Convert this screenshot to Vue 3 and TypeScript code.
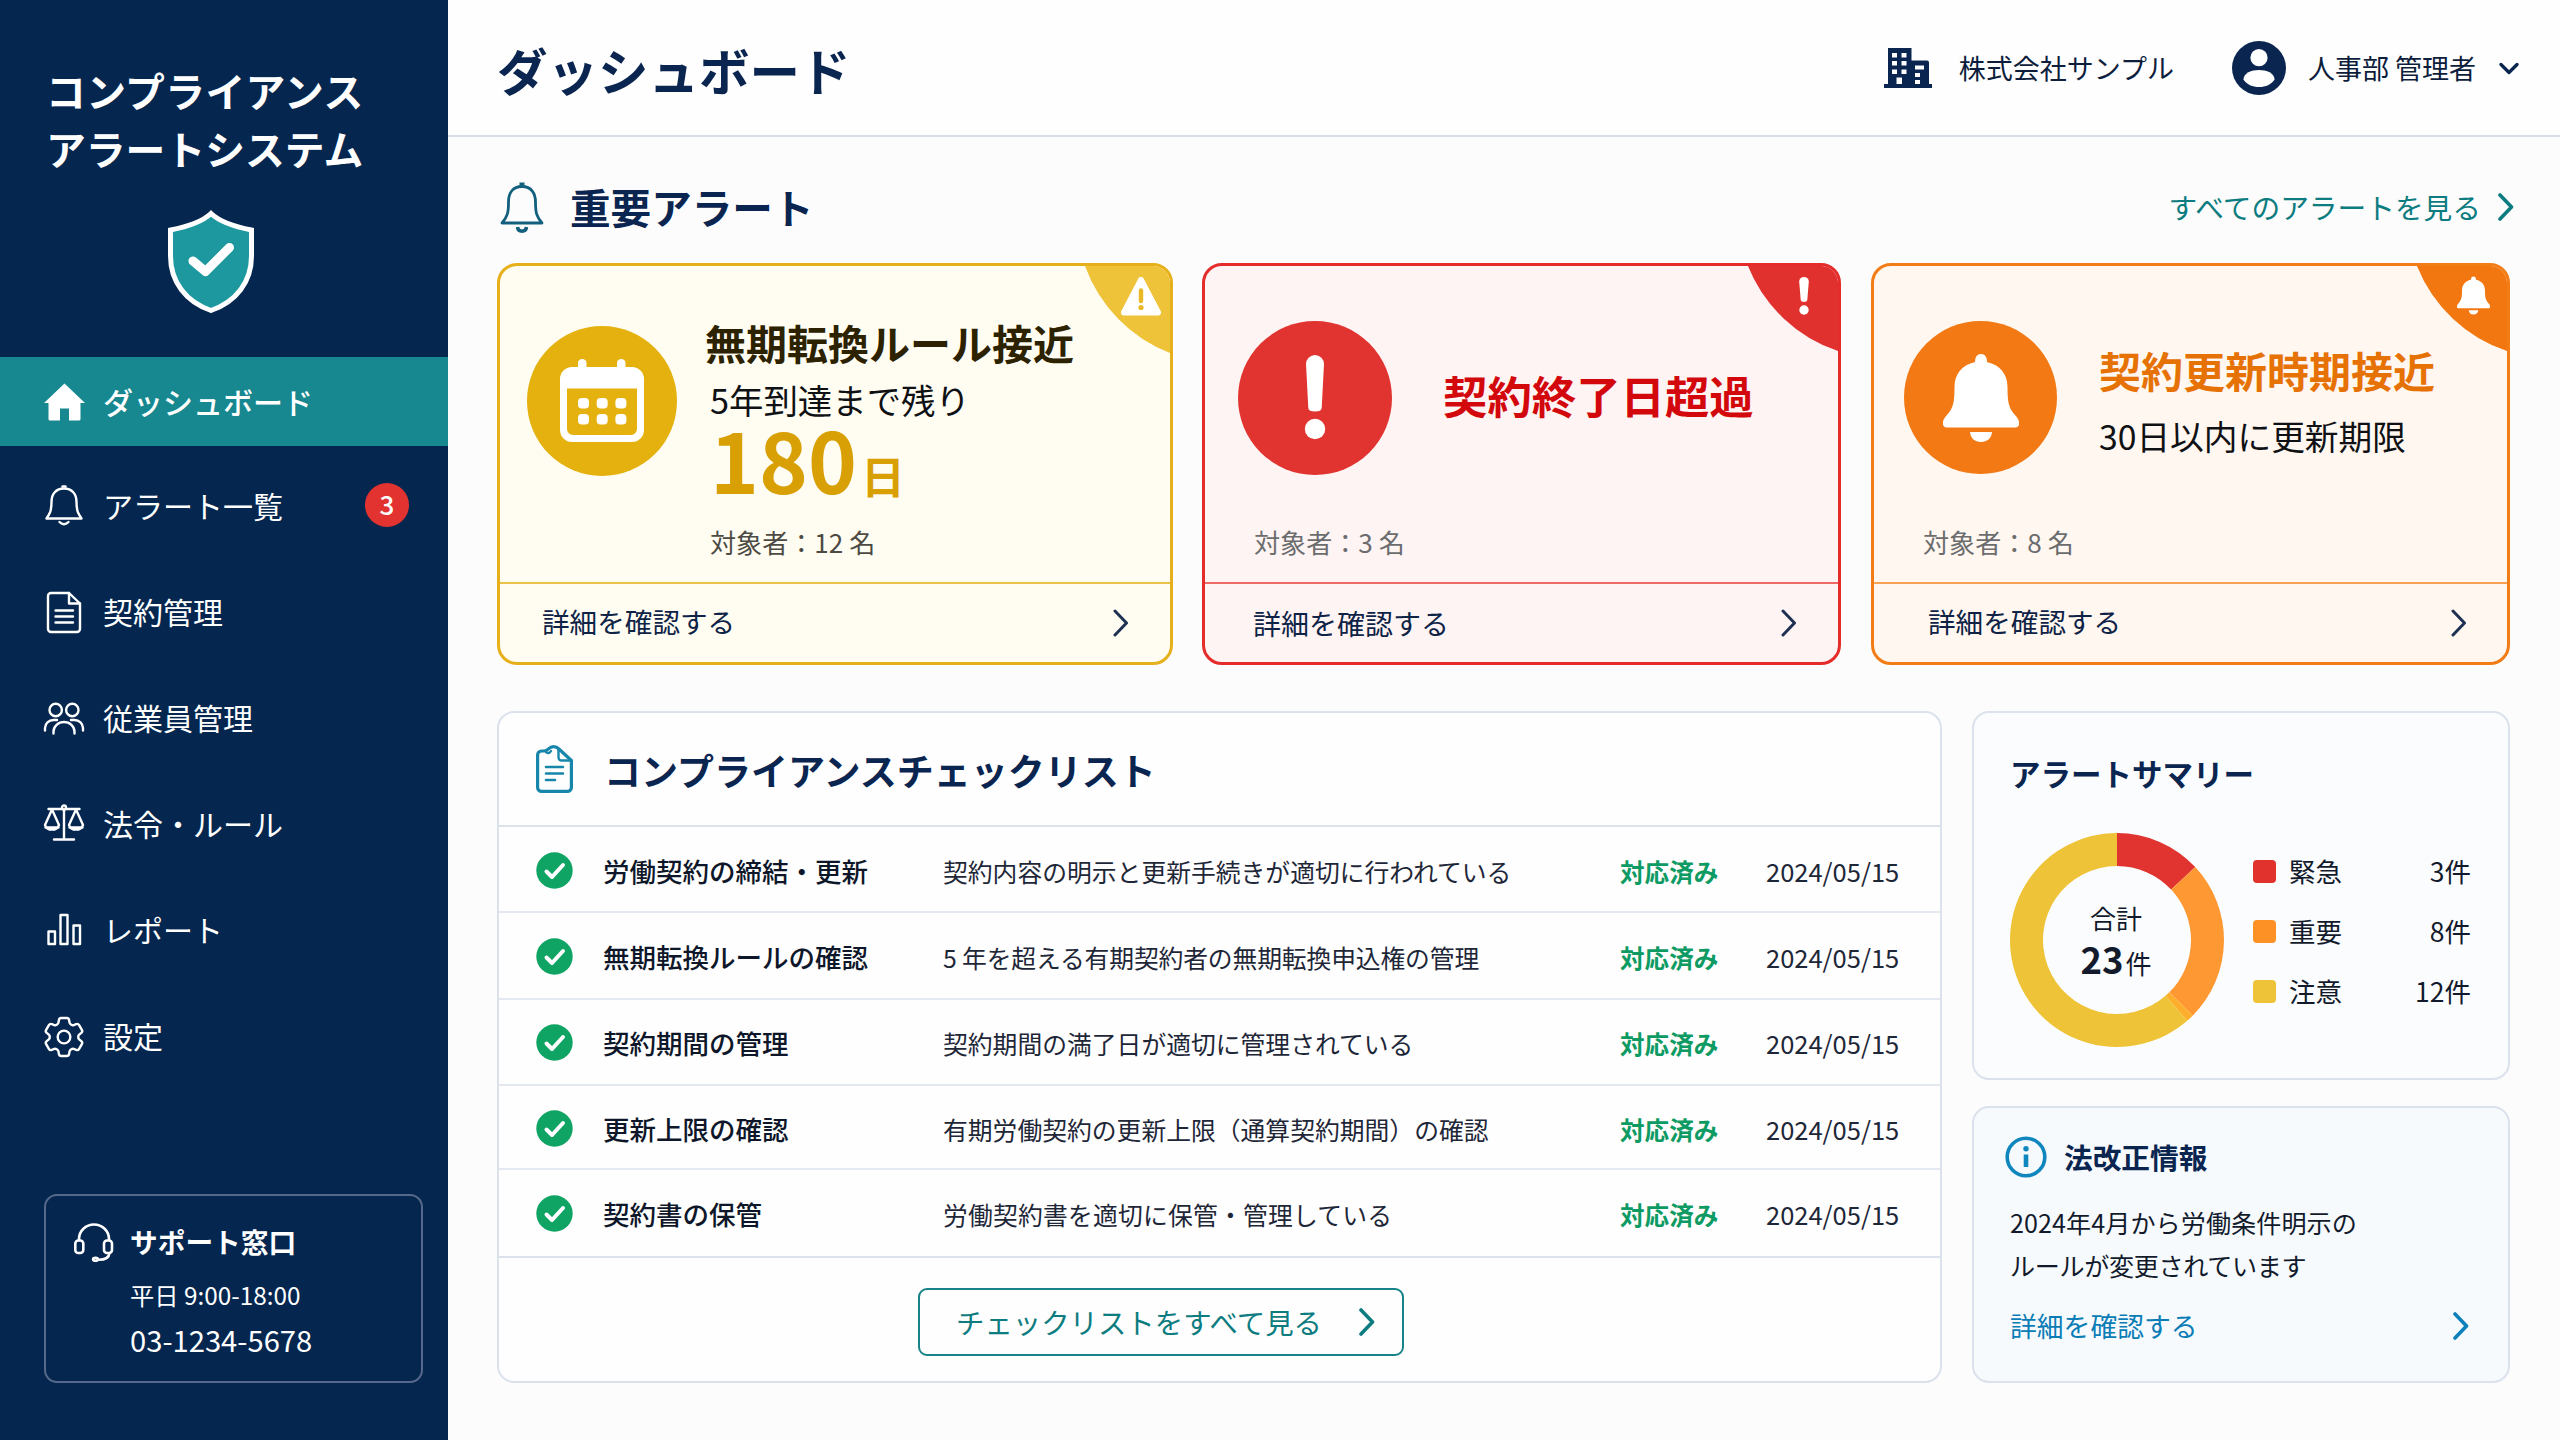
<script setup lang="ts">
interface NavItem {
  label: string
  viewBox?: string
  filled?: boolean
  active?: boolean
  badge?: number
  paths: string[]
}

interface CheckItem {
  name: string
  desc: string
  date: string
}

interface Slice {
  label: string
  count: number
  color: string
}

const navItems: NavItem[] = [
  {
    label: 'ダッシュボード',
    active: true,
    filled: true,
    paths: ['M22.5 3.5 L43 23 H38.5 V39 Q38.5 40.5 37 40.5 H27 V28.5 H18 V40.5 H8 Q6.5 40.5 6.5 39 V23 H2 Z'],
  },
  {
    label: 'アラート一覧',
    badge: 3,
    paths: [
      'M22 3.5 C14 3.5 9.5 9 9.5 17 C9.5 25.5 8 28.5 4.5 33.5 H39.5 C36 28.5 34.5 25.5 34.5 17 C34.5 9 30 3.5 22 3.5Z',
      'M20.5 1.5 H23.5',
      'M17.5 37 Q22 41.5 26.5 37',
    ],
  },
  {
    label: '契約管理',
    paths: [
      'M9 2 H27 L38 12.5 V38 A3 3 0 0 1 35 41 H9 A3 3 0 0 1 6 38 V5 A3 3 0 0 1 9 2Z',
      'M27 2 V12.5 H38',
      'M13.5 19.5 H31 M13.5 25.5 H31 M13.5 31.5 H31',
    ],
  },
  {
    label: '従業員管理',
    paths: [
      'M19.9 13 A6.2 6.2 0 1 1 7.5 13 A6.2 6.2 0 1 1 19.9 13Z',
      'M36.5 13 A6.2 6.2 0 1 1 24.1 13 A6.2 6.2 0 1 1 36.5 13Z',
      'M3 33.5 V31 A8.5 8 0 0 1 11.5 23 H15',
      'M41 33.5 V31 A8.5 8 0 0 0 32.5 23 H29',
      'M11.5 36.5 V34.5 A10.5 9.5 0 0 1 32.5 34.5 V36.5',
    ],
  },
  {
    label: '法令・ルール',
    paths: [
      'M24 4.5 A2 2 0 1 1 20 4.5 A2 2 0 1 1 24 4.5Z',
      'M22 7 V36.5 M12 36.5 H32 M6.5 6 H20 M24 6 H37.5',
      'M10 6.5 L3 22 A7.3 6.5 0 0 0 17 22 Z M3.5 24.5 H16.5',
      'M34 6.5 L27 22 A7.3 6.5 0 0 0 41 22 Z M27.5 24.5 H40.5',
    ],
  },
  {
    label: 'レポート',
    paths: ['M6.5 22.5 H13 V35 H6.5Z', 'M18.5 6 H25.5 V35 H18.5Z', 'M31.5 16.5 H38 V35 H31.5Z'],
  },
  {
    label: '設定',
    viewBox: '1.6 1.6 20.8 20.8',
    paths: [
      'M9.594 3.94c.09-.542.56-.94 1.11-.94h2.593c.55 0 1.02.398 1.11.94l.213 1.281c.063.374.313.686.645.87.074.04.147.083.22.127.325.196.72.257 1.075.124l1.217-.456a1.125 1.125 0 0 1 1.37.49l1.296 2.247a1.125 1.125 0 0 1-.26 1.431l-1.003.827c-.293.241-.438.613-.43.992a7.723 7.723 0 0 1 0 .255c-.008.378.137.75.43.991l1.004.827c.424.35.534.955.26 1.43l-1.298 2.247a1.125 1.125 0 0 1-1.369.491l-1.217-.456c-.355-.133-.75-.072-1.076.124a6.47 6.47 0 0 1-.22.128c-.331.183-.581.495-.644.869l-.213 1.281c-.09.543-.56.94-1.11.94h-2.594c-.55 0-1.019-.398-1.11-.94l-.213-1.281c-.062-.374-.312-.686-.644-.87a6.52 6.52 0 0 1-.22-.127c-.325-.196-.72-.257-1.076-.124l-1.217.456a1.125 1.125 0 0 1-1.369-.49l-1.297-2.247a1.125 1.125 0 0 1 .26-1.431l1.004-.827c.292-.24.437-.613.43-.991a6.932 6.932 0 0 1 0-.255c.007-.38-.138-.751-.43-.992l-1.004-.827a1.125 1.125 0 0 1-.26-1.43l1.297-2.247a1.125 1.125 0 0 1 1.37-.491l1.216.456c.356.133.751.072 1.076-.124.072-.044.146-.086.22-.128.332-.183.582-.495.644-.869l.214-1.28Z',
      'M15 12a3 3 0 1 1-6 0 3 3 0 0 1 6 0Z',
    ],
  },
]

const checks: CheckItem[] = [
  { name: '労働契約の締結・更新', desc: '契約内容の明示と更新手続きが適切に行われている', date: '2024/05/15' },
  { name: '無期転換ルールの確認', desc: '5 年を超える有期契約者の無期転換申込権の管理', date: '2024/05/15' },
  { name: '契約期間の管理', desc: '契約期間の満了日が適切に管理されている', date: '2024/05/15' },
  { name: '更新上限の確認', desc: '有期労働契約の更新上限（通算契約期間）の確認', date: '2024/05/15' },
  { name: '契約書の保管', desc: '労働契約書を適切に保管・管理している', date: '2024/05/15' },
]

const slices: Slice[] = [
  { label: '緊急', count: 3, color: '#e2322e' },
  { label: '重要', count: 8, color: '#fd9126' },
  { label: '注意', count: 12, color: '#efc338' },
]
const total = slices.reduce((sum, s) => sum + s.count, 0)

// Donut ring segments, angles clockwise from the top.
const ring = [
  { from: 0, to: 47, color: '#e1332f' },
  { from: 47, to: 135, color: '#fe9833' },
  { from: 135, to: 139, color: '#fdae2a' },
  { from: 139, to: 360, color: '#efc338' },
]

function arc(from: number, to: number): string {
  const point = (r: number, deg: number) => {
    const a = ((deg - 90) * Math.PI) / 180
    return `${(107 + r * Math.cos(a)).toFixed(2)} ${(107 + r * Math.sin(a)).toFixed(2)}`
  }
  const large = to - from > 180 ? 1 : 0
  return `M${point(107, from)} A107 107 0 ${large} 1 ${point(107, to)} L${point(74, to)} A74 74 0 ${large} 0 ${point(74, from)} Z`
}

const filledBell =
  'M38 0 C42 0 44 3 44 8 C57 11 64.5 20 64.5 33 C64.5 47 65.5 54 72 61 C78 67 77 73.5 72.5 73.5 H3.5 C-1 73.5 -2 67 4 61 C10.5 54 11.5 47 11.5 33 C11.5 20 19 11 32 8 C32 3 34 0 38 0Z M27 78 H49 C48.5 84.5 44 88 38 88 C32 88 27.5 84.5 27 78Z'
</script>

<template>
  <div class="app">
    <aside class="sidebar">
      <h1 class="brand"><span class="brand-first">コンプライアンス</span><br />アラートシステム</h1>
      <svg class="shield" width="88" height="104" viewBox="0 0 88 104">
        <path d="M44 3.5 C35 12 19 17 3.5 20 V46 C3.5 72 19 92 44 100.5 C69 92 84.5 72 84.5 46 V20 C69 17 53 12 44 3.5Z" fill="#1e989f" stroke="#fff" stroke-width="5" />
        <path d="M26 51 L38.5 61.5 L62.5 37.5" fill="none" stroke="#fff" stroke-width="9" stroke-linecap="round" stroke-linejoin="round" />
      </svg>
      <nav class="nav">
        <a v-for="item in navItems" :key="item.label" class="nav-item" :class="{ active: item.active }">
          <svg class="nav-icon" :class="{ filled: item.filled }" :viewBox="item.viewBox ?? '0 0 44 44'">
            <path v-for="d in item.paths" :key="d" :d="d" vector-effect="non-scaling-stroke" />
          </svg>
          <span class="nav-label">{{ item.label }}</span>
          <b v-if="item.badge" class="badge">{{ item.badge }}</b>
        </a>
      </nav>
      <section class="support">
        <svg class="headset" width="40" height="40" viewBox="0 0 40 40">
          <g fill="none" stroke="#fff" stroke-width="2.6">
            <path d="M5 18 V16 A15 14.5 0 0 1 35 16 V18" />
            <rect x="1.3" y="17.5" width="8" height="12.5" rx="3" />
            <rect x="30" y="17.5" width="8" height="12.5" rx="3" />
            <path d="M35.5 30 C35 35 31 37 24 36.8" />
            <ellipse cx="21.5" cy="36.3" rx="2.4" ry="1.5" />
          </g>
        </svg>
        <div>
          <p class="support-title">サポート窓口</p>
          <p class="support-hours">平日 9:00-18:00</p>
          <p class="support-tel">03-1234-5678</p>
        </div>
      </section>
    </aside>

    <div class="page">
      <header class="topbar">
        <h2 class="page-title">ダッシュボード</h2>
        <svg class="building" width="48" height="40" viewBox="0 0 48 40">
          <path fill="#0a2550" fill-rule="evenodd" d="M4 0 H27.5 V12.5 H43 Q45 12.5 45 14.5 V36 H48 V40 H0 V36 H4Z M8 5 V9.5 H13 V5Z M17.5 5 V9.5 H22.5 V5Z M8 13 V17.5 H13 V13Z M17.5 13 V17.5 H22.5 V13Z M8 21.5 V26 H13 V21.5Z M17.5 21.5 V26 H22.5 V21.5Z M12.5 29.5 V36 H18 V29.5Z M31 17.5 V21.5 H40 V17.5Z M31 25 V29 H36 V25Z M31 32 V36 H36 V32Z" />
        </svg>
        <span class="company">株式会社サンプル</span>
        <svg class="avatar" width="54" height="54" viewBox="0 0 54 54">
          <circle cx="27" cy="27" r="27" fill="#0a2550" />
          <circle cx="27" cy="16.7" r="8.6" fill="#fff" />
          <path d="M11.5 38.5 C11.5 32 19.5 29 27 29 C34.5 29 42.5 32 42.5 38.5 C39.5 43.5 33.5 46 27 46 C20.5 46 14.5 43.5 11.5 38.5Z" fill="#fff" />
        </svg>
        <span class="user">人事部 管理者</span>
        <svg class="caret" width="20" height="13" viewBox="0 0 20 13"><path d="M2 2.5 L10 10.5 L18 2.5" fill="none" stroke="#0a2550" stroke-width="3.2" stroke-linecap="round" stroke-linejoin="round" /></svg>
      </header>

      <main class="content">
        <div class="section-head">
          <svg width="44" height="51" viewBox="0 0 44 51">
            <g fill="none" stroke="#12607d" stroke-width="2.8" stroke-linejoin="round">
              <path d="M22 4.5 C12.5 4.5 8.5 11.5 8.5 20 C8.5 31 7.5 34.5 2 41 H42 C36.5 34.5 35.5 31 35.5 20 C35.5 11.5 31.5 4.5 22 4.5Z" />
              <path d="M22 0.5 V5" stroke-width="5" />
              <path d="M17.5 45 C18 50.5 26 50.5 26.5 45" stroke-width="3.5" />
            </g>
          </svg>
          <h3>重要アラート</h3>
          <a class="all-link">すべてのアラートを見る</a>
          <svg class="chev teal" width="16" height="28" viewBox="0 0 16 28"><path d="M2 2 L13.5 14 L2 26" /></svg>
        </div>

        <div class="cards">
          <article class="card yellow">
            <svg class="corner" width="85" height="87" viewBox="0 0 85 87"><path d="M0 0 A147 147 0 0 0 85 87 V0Z" fill="#eec239" /></svg>
            <svg class="corner-mark warn" width="42" height="39" viewBox="0 0 42 39">
              <path d="M21 3 L38 35.5 H4Z" fill="#fff" stroke="#fff" stroke-width="6" stroke-linejoin="round" />
              <path d="M21 13.5 V24" stroke="#e8b925" stroke-width="4.4" stroke-linecap="round" /><circle cx="21" cy="30.5" r="2.6" fill="#e8b925" />
            </svg>
            <div class="card-top">
              <div class="disc">
                <svg width="84" height="84" viewBox="0 0 84 84">
                  <rect x="18" y="0" width="8.5" height="18" rx="4.2" fill="#fff" /><rect x="57" y="0" width="8.5" height="18" rx="4.2" fill="#fff" />
                  <path fill="#fff" fill-rule="evenodd" d="M12 8 H72 A12 12 0 0 1 84 20 V71 A12 12 0 0 1 72 83 H12 A12 12 0 0 1 0 71 V20 A12 12 0 0 1 12 8Z M7 29.5 V70 A6 6 0 0 0 13 76 H71 A6 6 0 0 0 77 70 V29.5Z" />
                  <g fill="#fff">
                    <rect v-for="n in 6" :key="n" :x="18 + ((n - 1) % 3) * 18.7" :y="n > 3 ? 55 : 39" width="11" height="10.5" rx="3.8" />
                  </g>
                </svg>
              </div>
              <div class="card-text">
                <h4>無期転換ルール接近</h4>
                <p class="sub">5年到達まで残り</p>
                <p class="days">180<small>日</small></p>
              </div>
            </div>
            <p class="target">対象者：12 名</p>
            <a class="card-foot"><span>詳細を確認する</span><svg class="chev" width="16" height="28" viewBox="0 0 16 28"><path d="M2 2 L13.5 14 L2 26" /></svg></a>
          </article>

          <article class="card red">
            <svg class="corner" width="90" height="85" viewBox="0 0 90 85"><path d="M0 0 A147 147 0 0 0 90 85 V0Z" fill="#e0312f" /></svg>
            <svg class="corner-mark bang" width="12" height="38" viewBox="0 0 12 38"><path d="M1.2 4.5 A4.8 4.5 0 0 1 10.8 4.5 L9.3 23 Q9 25 6 25 Q3 25 2.7 23Z" fill="#fff" /><circle cx="6" cy="33" r="4.7" fill="#fff" /></svg>
            <div class="card-top">
              <div class="disc">
                <svg width="22" height="86" viewBox="0 0 22 86"><path d="M2 9 A9 9 0 0 1 20 9 L17.7 53 Q17.5 56.5 11 56.5 Q4.5 56.5 4.3 53Z" fill="#fff" /><circle cx="11" cy="74" r="10.2" fill="#fff" /></svg>
              </div>
              <div class="card-text"><h4>契約終了日超過</h4></div>
            </div>
            <p class="target">対象者：3 名</p>
            <a class="card-foot"><span>詳細を確認する</span><svg class="chev" width="16" height="28" viewBox="0 0 16 28"><path d="M2 2 L13.5 14 L2 26" /></svg></a>
          </article>

          <article class="card orange">
            <svg class="corner" width="90" height="85" viewBox="0 0 90 85"><path d="M0 0 A147 147 0 0 0 90 85 V0Z" fill="#f27711" /></svg>
            <svg class="corner-mark ring" width="33" height="39" viewBox="0 0 76 88"><path :d="filledBell" fill="#fff" /></svg>
            <div class="card-top">
              <div class="disc"><svg width="76" height="88" viewBox="0 0 76 88"><path :d="filledBell" fill="#fff" /></svg></div>
              <div class="card-text">
                <h4>契約更新時期接近</h4>
                <p class="sub">30日以内に更新期限</p>
              </div>
            </div>
            <p class="target">対象者：8 名</p>
            <a class="card-foot"><span>詳細を確認する</span><svg class="chev" width="16" height="28" viewBox="0 0 16 28"><path d="M2 2 L13.5 14 L2 26" /></svg></a>
          </article>
        </div>

        <div class="lower">
          <section class="panel checklist">
            <div class="check-head">
              <svg width="37" height="48" viewBox="0 0 37 48">
                <g fill="none" stroke="#1786ab" stroke-width="3.2" stroke-linejoin="round" stroke-linecap="round">
                  <path d="M5.5 6 H8 C12.5 6 12.5 1.6 17.5 1.6 C21 1.6 22 3 24 5 L35.4 15.5 V42.5 A4 4 0 0 1 31.4 46.4 H5.6 A4 4 0 0 1 1.6 42.5 V10 A4 4 0 0 1 5.5 6Z" />
                  <path d="M10 7 Q13 9.5 15 6" stroke-width="2.4" />
                  <path d="M22.5 4.5 V12.5 A3 3 0 0 0 25.5 15.5 H35" stroke-width="2.4" />
                  <path d="M10 22 H27 M10 28.5 H27 M10 35 H19" stroke-width="2.6" />
                </g>
              </svg>
              <h3>コンプライアンスチェックリスト</h3>
            </div>
            <div v-for="c in checks" :key="c.name" class="check-row">
              <svg width="37" height="37" viewBox="0 0 37 37">
                <circle cx="18.5" cy="18.5" r="18.2" fill="#0fa463" />
                <path d="M10.5 19.5 L16 25 L27 13" fill="none" stroke="#fff" stroke-width="4" stroke-linecap="round" stroke-linejoin="round" />
              </svg>
              <span class="name">{{ c.name }}</span>
              <span class="desc">{{ c.desc }}</span>
              <span class="state">対応済み</span>
              <span class="date">{{ c.date }}</span>
            </div>
            <div class="check-foot">
              <a class="button">チェックリストをすべて見る<svg class="chev teal" width="16" height="28" viewBox="0 0 16 28"><path d="M2 2 L13.5 14 L2 26" /></svg></a>
            </div>
          </section>

          <div class="side">
            <section class="panel summary">
              <h3>アラートサマリー</h3>
              <div class="summary-body">
                <div class="donut">
                  <svg width="214" height="214" viewBox="0 0 214 214"><path v-for="s in ring" :key="s.from" :d="arc(s.from, s.to)" :fill="s.color" /></svg>
                  <div class="donut-label">
                    <span>合計</span>
                    <span class="sum"><b>{{ total }}</b>件</span>
                  </div>
                </div>
                <ul class="legend">
                  <li v-for="s in slices" :key="s.label">
                    <i :style="{ background: s.color }"></i><span class="legend-name">{{ s.label }}</span><span>{{ s.count }}件</span>
                  </li>
                </ul>
              </div>
            </section>
            <section class="panel law">
              <div class="law-head">
                <svg width="42" height="42" viewBox="0 0 42 42">
                  <circle cx="21" cy="21" r="18.8" fill="none" stroke="#0f86bd" stroke-width="3.6" />
                  <circle cx="21" cy="12.8" r="2.7" fill="#0f86bd" /><path d="M21 18.5 V31" stroke="#0f86bd" stroke-width="4.6" />
                </svg>
                <h3>法改正情報</h3>
              </div>
              <p>2024年4月から労働条件明示の<br /><span class="tight">ルールが変更されています</span></p>
              <a class="law-link">詳細を確認する<svg class="chev blue" width="16" height="28" viewBox="0 0 16 28"><path d="M2 2 L13.5 14 L2 26" /></svg></a>
            </section>
          </div>
        </div>
      </main>
    </div>
  </div>
</template>

<style>
body {
  margin: 0;
}
</style>

<style scoped>
.app {
  display: flex;
  width: 2560px;
  height: 1440px;
  overflow: hidden;
  background: #fcfcfd;
  color: #121a2c;
  font-family: 'Noto Sans CJK JP', 'Noto Sans', sans-serif;
  white-space: nowrap;
}
h1, h2, h3, h4, p, ul {
  margin: 0;
  padding: 0;
}
svg {
  display: block;
  flex: none;
}
.chev path {
  fill: none;
  stroke: #1e3152;
  stroke-width: 3;
  stroke-linecap: round;
  stroke-linejoin: round;
}
.chev.teal path {
  stroke: #0d7c80;
  stroke-width: 3.6;
}
.chev.blue path {
  stroke: #0b80ba;
  stroke-width: 3.6;
}

.sidebar {
  display: flex;
  flex-direction: column;
  flex: none;
  box-sizing: border-box;
  width: 448px;
  padding-top: 61px;
  background: #04264f;
  color: #fff;
}
.brand {
  padding-left: 46px;
  font-size: 39.8px;
  line-height: 58px;
  font-weight: 700;
}
.brand-first {
  letter-spacing: 0.35px;
}
.shield {
  margin: 33px 0 43px 167px;
}
.nav {
  display: flex;
  flex-direction: column;
  gap: 17px;
}
.nav-item {
  display: flex;
  align-items: center;
  box-sizing: border-box;
  height: 89px;
  padding: 0 39px 0 42px;
  font-size: 30px;
  line-height: 44px;
}
.nav-item.active {
  margin-bottom: -1px;
  background: #178890;
  font-weight: 500;
}
.nav-label {
  margin-top: -4px;
}
.active .nav-label {
  margin-top: -2px;
}
.nav-icon {
  width: 44px;
  height: 44px;
  margin-right: 17px;
  fill: none;
  stroke: #fff;
  stroke-width: 2.4;
  stroke-linejoin: round;
  stroke-linecap: round;
  overflow: visible;
}
.nav-icon.filled {
  fill: #fff;
  stroke: none;
}
.badge {
  width: 44px;
  height: 44px;
  margin: -3px 0 0 auto;
  border-radius: 50%;
  background: #e23330;
  font-size: 26px;
  line-height: 42px;
  font-weight: 500;
  text-align: center;
}
.support {
  display: flex;
  box-sizing: border-box;
  width: 379px;
  height: 189px;
  margin: auto 0 57px 44px;
  padding: 27px 0 0 28px;
  border: 2px solid #56698a;
  border-radius: 13px;
}
.headset {
  margin-right: 16px;
}
.support-title {
  font-size: 27.7px;
  line-height: 36px;
  font-weight: 700;
}
.support-hours {
  margin-top: 18px;
  font-size: 24.3px;
  line-height: 36px;
}
.support-tel {
  margin-top: 6px;
  font-size: 29.2px;
  line-height: 40px;
}

.page {
  display: flex;
  flex-direction: column;
  flex: 1;
}
.topbar {
  display: flex;
  align-items: center;
  box-sizing: border-box;
  height: 137px;
  padding: 1px 41px 0 49px;
  border-bottom: 2px solid #d6dde8;
  background: #fefefe;
  color: #0d1d3c;
  font-size: 27px;
  line-height: 40px;
}
.page-title {
  margin: 2px auto 0 0;
  color: #0a2550;
  font-size: 50.5px;
  line-height: 72px;
  font-weight: 700;
}
.building {
  margin-right: 27px;
}
.avatar {
  margin: 0 22px 0 58px;
}
.caret {
  margin-left: 23px;
}

.content {
  padding: 0 50px 0 49px;
}
.section-head {
  display: flex;
  align-items: center;
  box-sizing: border-box;
  height: 126px;
  padding: 14px 0 0 3px;
  margin-right: -4px;
}
.section-head h3 {
  margin: -1px auto 0 26px;
  color: #0a2550;
  font-size: 40.6px;
  line-height: 56px;
  font-weight: 700;
}
.all-link {
  margin-right: 17px;
  color: #0d7c80;
  font-size: 28.7px;
  line-height: 40px;
}
.cards {
  display: grid;
  grid-template-columns: 705px 669px 639px;
}
.card {
  position: relative;
  display: flex;
  flex-direction: column;
  box-sizing: border-box;
  width: 639px;
  height: 402px;
  border: 3px solid;
  border-radius: 20px;
  overflow: hidden;
}
.card.yellow { width: 676px; border-color: #e6b01c; background: #fffdf2; }
.card.red { border-color: #e42c2b; background: #fef4f3; }
.card.orange { border-color: #f27c16; background: #fff7f0; }
.corner {
  position: absolute;
  top: 0;
  right: 0;
}
.corner-mark {
  position: absolute;
}
.corner-mark.warn { top: 11px; right: 8px; }
.corner-mark.bang { top: 11px; right: 28px; }
.corner-mark.ring { top: 10px; right: 17px; }
.card-top {
  display: flex;
  align-items: flex-start;
  height: 256px;
}
.disc {
  display: flex;
  align-items: center;
  justify-content: center;
  flex: none;
  border-radius: 50%;
}
.yellow .disc { width: 150px; height: 150px; margin: 60px 28px 0 27px; background: #e4b10f; }
.red .disc { width: 154px; height: 154px; margin: 55px 51px 0 33px; background: #e13430; }
.orange .disc { width: 153px; height: 153px; margin: 55px 42px 0 30px; background: #f27913; }
h4 {
  line-height: 50px;
  font-weight: 700;
}
.yellow h4 { margin-top: 51px; font-size: 41px; color: #2c2200; }
.red h4 { margin-top: 104px; font-size: 44.4px; color: #d3080d; }
.orange h4 { margin-top: 79px; font-size: 42px; color: #e67206; }
.sub {
  color: #0f1114;
  font-size: 33.7px;
  line-height: 44px;
}
.yellow .sub { margin: 12px 0 0 5px; font-size: 34.4px; line-height: 40px; }
.orange .sub { margin-top: 19px; }
.days {
  margin: 8px 0 0 5px;
  color: #d9a006;
  font-size: 83px;
  line-height: 62px;
  font-weight: 700;
}
.days small {
  margin-left: 4px;
  font-size: 44px;
}
.target {
  height: 40px;
  padding-bottom: 20px;
  color: #6b6c6e;
  font-size: 26.1px;
  line-height: 40px;
}
.yellow .target { padding-left: 210px; color: #4c4a42; }
.red .target { padding-left: 49px; }
.orange .target { padding-left: 49px; }
.card-foot {
  display: flex;
  align-items: center;
  justify-content: space-between;
  flex: 1;
  border-top: 2px solid;
  color: #0f2347;
  font-size: 27.6px;
  line-height: 40px;
}
.card-foot span {
  margin-top: -4px;
}
.yellow .card-foot { padding: 0 41px 0 42px; border-color: #ecc14a; }
.red .card-foot { padding: 0 41px 0 48px; border-color: #ee6a66; font-size: 28px; }
.red .card-foot span { margin-top: 0; }
.orange .card-foot { padding: 0 40px 0 54px; border-color: #f6a355; }

.lower {
  display: flex;
  justify-content: space-between;
  margin-top: 46px;
}
.panel {
  box-sizing: border-box;
  border: 2px solid #dbe2ec;
  border-radius: 17px;
  background: #fefefe;
}
.checklist {
  width: 1445px;
  height: 672px;
}
.check-head {
  display: flex;
  align-items: center;
  gap: 31px;
  height: 112px;
  padding-left: 37px;
  border-bottom: 2px solid #dbe2ec;
}
.check-head h3 {
  margin-top: 2px;
  color: #0a2550;
  font-size: 37px;
  line-height: 50px;
  font-weight: 700;
}
.check-row {
  display: flex;
  align-items: center;
  box-sizing: border-box;
  height: 86px;
  padding: 2px 0 0 37px;
  border-bottom: 2px solid #e4e9f1;
  line-height: 40px;
}
.check-row span {
  padding-top: 2px;
}
.check-row:nth-child(3) { height: 87px; padding-top: 1px; }
.check-row:nth-child(3) .desc { letter-spacing: -0.14px; }
.check-row:nth-child(4) { height: 86px; padding-top: 0; }
.check-row:nth-child(5) { height: 84px; }
.check-row:nth-child(6) {
  height: 88px;
  padding-top: 0;
  border-color: #dbe2ec;
}
.check-row:nth-child(6) .desc { letter-spacing: 0.2px; }
.name {
  width: 340px;
  margin-left: 30px;
  font-size: 26.5px;
  font-weight: 500;
  color: #0e172a;
}
.desc {
  width: 677px;
  font-size: 24.8px;
  color: #1e2738;
}
.state {
  width: 146px;
  font-size: 24.6px;
  font-weight: 700;
  color: #0d9a63;
}
.date {
  font-size: 25.5px;
  color: #1e2738;
}
.check-foot {
  display: flex;
  padding: 30px 0 0 419px;
}
.button {
  display: flex;
  align-items: center;
  justify-content: space-between;
  box-sizing: border-box;
  width: 486px;
  height: 68px;
  padding: 0 27px 0 36px;
  border: 2px solid #178287;
  border-radius: 9px;
  color: #0d7c80;
  font-size: 28.4px;
  line-height: 40px;
}

.side {
  display: flex;
  flex-direction: column;
  justify-content: space-between;
}
.summary {
  width: 538px;
  height: 369px;
  padding: 38px 37px 0 36px;
  background: #fbfcfe;
}
.summary h3 {
  color: #0a2550;
  font-size: 30.5px;
  line-height: 44px;
  font-weight: 700;
}
.summary-body {
  display: flex;
  margin-top: 38px;
}
.donut {
  position: relative;
  width: 214px;
  height: 214px;
}
.donut-label {
  position: absolute;
  inset: 0;
  display: flex;
  flex-direction: column;
  align-items: center;
  padding: 65px 2px 0 0;
  font-size: 26px;
  line-height: 40px;
}
.sum {
  margin-top: 1px;
}
.sum b {
  margin-right: 2px;
  font-size: 36.5px;
}
.legend {
  flex: 1;
  margin: 18px 0 0 29px;
  list-style: none;
  font-size: 26.5px;
}
.legend li {
  display: flex;
  align-items: center;
  height: 40px;
  margin-bottom: 20px;
  line-height: 40px;
}
.legend i {
  width: 23px;
  height: 23px;
  margin-right: 13px;
  border-radius: 4px;
}
.legend-name {
  margin-right: auto;
}
.law {
  width: 538px;
  height: 277px;
  padding: 28px 39px 0 36px;
  background: #f6fafd;
}
.law-head {
  display: flex;
  align-items: center;
  gap: 17px;
  height: 42px;
  margin-left: -5px;
}
.law-head h3 {
  color: #0a2550;
  font-size: 28.7px;
  line-height: 42px;
  margin-top: -1px;
  font-weight: 700;
}
.law p {
  margin-top: 23px;
  font-size: 25.1px;
  line-height: 42.5px;
  letter-spacing: 0.08px;
}
.law .tight {
  letter-spacing: -0.35px;
}
.law-link {
  display: flex;
  align-items: center;
  justify-content: space-between;
  margin-top: 20px;
  color: #0b7db6;
  font-size: 26.8px;
  line-height: 40px;
}
</style>
